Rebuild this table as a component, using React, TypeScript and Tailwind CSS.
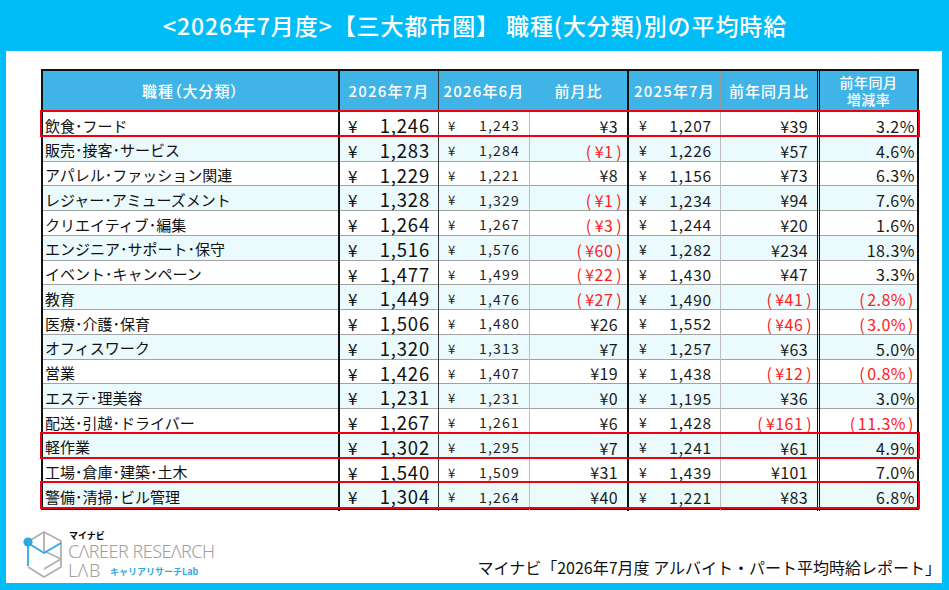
import React from "react";

type Row = {
  name: string;
  jul: string;
  jun: string;
  mom: string;
  prev: string;
  yoy: string;
  rate: string;
  mark?: boolean;
};

// "･" is the narrow middle dot used in the sheet
const rows: Row[] = [
  { name: "飲食･フード", jul: "1,246", jun: "1,243", mom: "¥3", prev: "1,207", yoy: "¥39", rate: "3.2%", mark: true },
  { name: "販売･接客･サービス", jul: "1,283", jun: "1,284", mom: "-¥1", prev: "1,226", yoy: "¥57", rate: "4.6%" },
  { name: "アパレル･ファッション関連", jul: "1,229", jun: "1,221", mom: "¥8", prev: "1,156", yoy: "¥73", rate: "6.3%" },
  { name: "レジャー･アミューズメント", jul: "1,328", jun: "1,329", mom: "-¥1", prev: "1,234", yoy: "¥94", rate: "7.6%" },
  { name: "クリエイティブ･編集", jul: "1,264", jun: "1,267", mom: "-¥3", prev: "1,244", yoy: "¥20", rate: "1.6%" },
  { name: "エンジニア･サポート･保守", jul: "1,516", jun: "1,576", mom: "-¥60", prev: "1,282", yoy: "¥234", rate: "18.3%" },
  { name: "イベント･キャンペーン", jul: "1,477", jun: "1,499", mom: "-¥22", prev: "1,430", yoy: "¥47", rate: "3.3%" },
  { name: "教育", jul: "1,449", jun: "1,476", mom: "-¥27", prev: "1,490", yoy: "-¥41", rate: "-2.8%" },
  { name: "医療･介護･保育", jul: "1,506", jun: "1,480", mom: "¥26", prev: "1,552", yoy: "-¥46", rate: "-3.0%" },
  { name: "オフィスワーク", jul: "1,320", jun: "1,313", mom: "¥7", prev: "1,257", yoy: "¥63", rate: "5.0%" },
  { name: "営業", jul: "1,426", jun: "1,407", mom: "¥19", prev: "1,438", yoy: "-¥12", rate: "-0.8%" },
  { name: "エステ･理美容", jul: "1,231", jun: "1,231", mom: "¥0", prev: "1,195", yoy: "¥36", rate: "3.0%" },
  { name: "配送･引越･ドライバー", jul: "1,267", jun: "1,261", mom: "¥6", prev: "1,428", yoy: "-¥161", rate: "-11.3%" },
  { name: "軽作業", jul: "1,302", jun: "1,295", mom: "¥7", prev: "1,241", yoy: "¥61", rate: "4.9%", mark: true },
  { name: "工場･倉庫･建築･土木", jul: "1,540", jun: "1,509", mom: "¥31", prev: "1,439", yoy: "¥101", rate: "7.0%" },
  { name: "警備･清掃･ビル管理", jul: "1,304", jun: "1,264", mom: "¥40", prev: "1,221", yoy: "¥83", rate: "6.8%", mark: true },
];

const cols = "grid grid-cols-[297px_99px_91px_99px_92px_99px_97px]";
const neg = (v: string) => v.startsWith("-");

// accounting style: negatives shown red in parentheses
function Val({ v, gap }: { v: string; gap: string }) {
  if (!neg(v)) return <>{v}</>;
  return (
    <span className="text-[#ff2020]">
      <span className={gap}>(</span>
      {v.slice(1)}
      <span className={gap}>)</span>
    </span>
  );
}

function Diff({ v }: { v: string }) {
  return (
    <div className={`flex items-center justify-end text-[16px] tracking-[0.4px] ${neg(v) ? "pr-[2px]" : "pr-[9px] text-[#1a1a1a]"}`}>
      <Val v={v} gap="mx-[3px]" />
    </div>
  );
}

function Logo() {
  return (
    <div className="flex items-start gap-[4px]">
      <svg width="44" height="50" viewBox="0 0 44 50">
        <g fill="none" stroke="#b0b0b0" strokeWidth="1.8" strokeLinejoin="round">
          <polyline points="9,11 24,2 41,11 41,37 24,47 8,37" />
          <polyline points="24,2 24,21" />
          <polyline points="24,21 41,29 24,39" />
        </g>
        <g fill="none" stroke="#2fa8e0" strokeWidth="1.8" strokeLinejoin="round">
          <polyline points="8,13 24,23 41,13" />
          <polyline points="8,13 8,36" />
        </g>
        <circle cx="8" cy="12" r="4.6" fill="#2fa8e0" />
      </svg>
      <div className="flex flex-col">
        <span className="h-[12px] leading-[12px] text-[9px] font-bold text-black ml-[1px]">マイナビ</span>
        <span className="h-[19px] leading-[19px] text-[18px] font-light text-[#a0a0a0] tracking-[-0.5px] [font-family:'Noto_Sans','Noto_Sans_CJK_JP',sans-serif]">CΛREER RESEΛRCH</span>
        <div className="h-[19px] flex items-center gap-[9px]">
          <span className="leading-[19px] text-[18px] font-light text-[#a0a0a0] tracking-[0.6px] [font-family:'Noto_Sans','Noto_Sans_CJK_JP',sans-serif]">LΛB</span>
          <span className="leading-[12px] text-[9px] font-bold text-[#2fa8e0] mt-[3px]">キャリアリサーチLab</span>
        </div>
      </div>
    </div>
  );
}

export default function App() {
  return (
    <div className="w-[949px] h-[590px] bg-[#00bdf7] flex flex-col [font-family:'Noto_Sans_CJK_JP','Noto_Sans',sans-serif] overflow-hidden">
      <div className="h-[51px] flex items-center justify-center pl-[1px] text-white text-[23px] font-medium tracking-[0.9px]">
        &lt;2026年7月度&gt;【三大都市圏】 職種(大分類)別の平均時給
      </div>
      <div className="ml-[6px] mr-[7px] h-[532px] bg-white flex flex-col">
        <div className="mt-[18px] ml-[35px] w-[878px] border-2 border-[#111] text-[#111]">
          <div className={`${cols} h-[41px] bg-[#40b4e6] text-white text-[15px] font-medium border-b border-[#333]`}>
            <div className="flex items-center justify-center border-r-2 border-[#111] [font-feature-settings:'palt'] tracking-[1px]">職種（大分類）</div>
            <div className="flex items-center justify-center border-r border-[#333] tracking-[1.2px]">2026年7月</div>
            <div className="flex items-center justify-center border-r border-[#9a9a9a] tracking-[1.2px]">2026年6月</div>
            <div className="flex items-center justify-center border-r-2 border-[#111] tracking-[1px]">前月比</div>
            <div className="flex items-center justify-center border-r border-[#9a9a9a] tracking-[1.2px]">2025年7月</div>
            <div className="flex items-center justify-center border-r-[3px] border-double border-[#111] tracking-[1px]">前年同月比</div>
            <div className="flex flex-col items-center justify-center text-[14px] leading-[17px] tracking-[0.5px]">
              <span>前年同月</span>
              <span>増減率</span>
            </div>
          </div>
          {rows.map((r, i) => (
            <div
              key={r.name}
              className={`${cols} relative h-[24.75px] ${i < rows.length - 1 ? "border-b border-[#a3a3a3]" : ""} ${i % 2 === 1 ? "bg-[#eafafd]" : "bg-white"}`}
            >
              <div className="flex items-center pl-[2px] text-[15px] border-r-2 border-[#111]">{r.name}</div>
              <div className="flex items-center justify-between pl-[8px] pr-[8px] border-r border-[#333]">
                <span className="text-[17px]">¥</span>
                <span className="text-[18.5px] tracking-[0.8px]">{r.jul}</span>
              </div>
              <div className="flex items-center justify-between pl-[9px] pr-[9px] border-r border-[#bdbdbd] text-[#222]">
                <span className="text-[13px]">¥</span>
                <span className="text-[14px] tracking-[1.2px]">{r.jun}</span>
              </div>
              <div className="border-r-2 border-[#111] flex justify-end">
                <Diff v={r.mom} />
              </div>
              <div className="flex items-center justify-between pl-[10px] pr-[8px] border-r border-[#bdbdbd] text-[#1a1a1a]">
                <span className="text-[14px]">¥</span>
                <span className="text-[15.5px] tracking-[0.8px]">{r.prev}</span>
              </div>
              <div className="border-r-[3px] border-double border-[#111] flex justify-end">
                <Diff v={r.yoy} />
              </div>
              <div className={`flex items-center justify-end text-[16px] tracking-[0.5px] ${neg(r.rate) ? "pr-[1px]" : "pr-[2px] text-[#1a1a1a]"}`}>
                <Val v={r.rate} gap="mx-[2px]" />
              </div>
              {r.mark && (
                <div className="absolute -left-[3px] -right-[3px] -top-[2px] -bottom-[1px] border-2 border-[#ee0010] pointer-events-none" />
              )}
            </div>
          ))}
        </div>
        <div className="mt-auto mb-[3px] flex items-end justify-between pl-[14px] pr-[1px]">
          <Logo />
          <div className="text-[16px] text-[#111] mb-[1px]">マイナビ「2026年7月度 アルバイト・パート平均時給レポート」</div>
        </div>
      </div>
    </div>
  );
}
